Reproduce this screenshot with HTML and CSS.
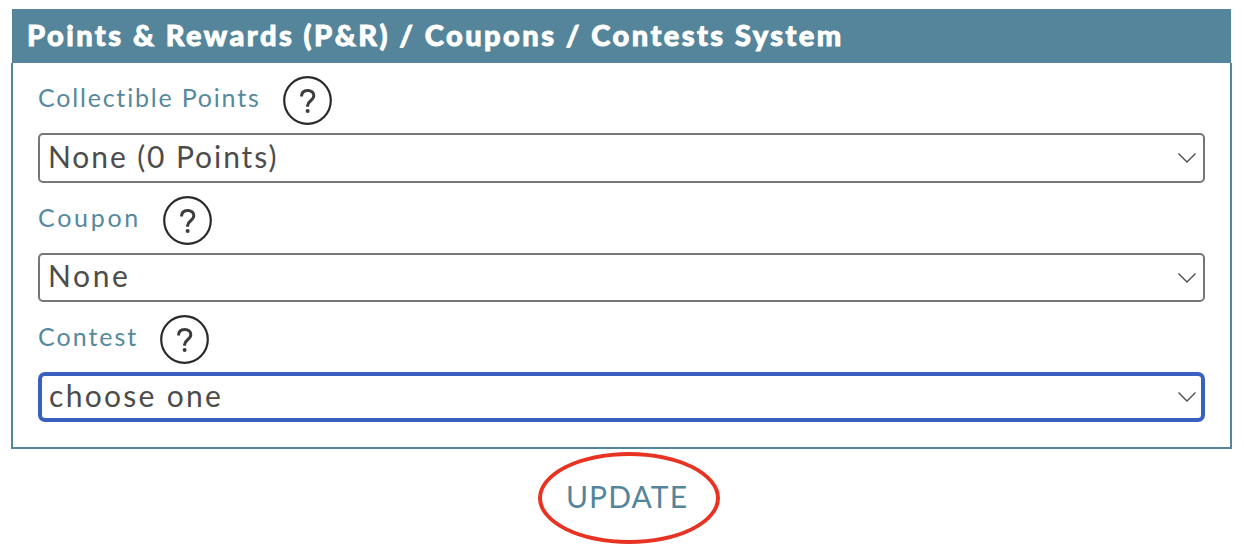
FILE: index.html
```html
<!doctype html>
<html lang="en">
  <head>
    <meta charset="utf-8">
    <title>Points &amp; Rewards</title>
    <link rel="stylesheet" href="styles.css">
  </head>
  <body>
    <svg class="sprite" aria-hidden="true">
      <symbol id="help" viewBox="0 0 49 49">
        <circle cx="24.5" cy="24.5" r="23.3" fill="none" stroke="#2a2a2a" stroke-width="2.2"/>
        <path d="M18.500 20.500c0-3.900 2.400-6 6.200-6s6.100 2.200 6.100 5.300c0 4.800-6.200 5-6.200 9.700v1.200" fill="none" stroke="#3c3c3c" stroke-width="3"/>
        <circle cx="24.600" cy="34.900" r="2" fill="#3c3c3c"/>
      </symbol>
      <symbol id="chevron" viewBox="0 0 20 12">
        <path d="M1.500 1.500L10 10l8.500-8.500" fill="none" stroke="#4c4c4c" stroke-width="1.400"/>
      </symbol>
    </svg>

    <form id="rewards">
      <h2>Points &amp; Rewards (P&amp;R) / Coupons / Contests System</h2>
      <div class="panel">
        <div class="field">
          <div class="label-row">
            <label class="label-points" for="points">Collectible Points</label>
            <svg class="help"><use href="#help"/></svg>
          </div>
          <div class="select">
            <select id="points"><option>None (0 Points)</option></select>
            <svg class="chevron"><use href="#chevron"/></svg>
          </div>
        </div>
        <div class="field">
          <div class="label-row">
            <label class="label-coupon" for="coupon">Coupon</label>
            <svg class="help"><use href="#help"/></svg>
          </div>
          <div class="select">
            <select id="coupon"><option>None</option></select>
            <svg class="chevron"><use href="#chevron"/></svg>
          </div>
        </div>
        <div class="field">
          <div class="label-row">
            <label class="label-contest" for="contest">Contest</label>
            <svg class="help"><use href="#help"/></svg>
          </div>
          <div class="select">
            <select id="contest" class="active"><option>choose one</option></select>
            <svg class="chevron"><use href="#chevron"/></svg>
          </div>
        </div>
      </div>
      <button type="button" class="update">UPDATE</button>
    </form>
  </body>
</html>
```

FILE: styles.css
```css
* {
  box-sizing: border-box;
}

body {
  margin: 0;
  background: #fff;
  font-family: Lato, "Liberation Sans", sans-serif;
}

.sprite {
  display: none;
}

#rewards {
  width: 1221px;
  margin: 0 0 0 11px;
  padding-top: 9px;
}

h2 {
  height: 54px;
  margin: 0 1px;
  padding-left: 15px;
  background: #55859a;
  color: #fff;
  font-size: 29px;
  font-weight: 900;
  line-height: 51px;
  letter-spacing: 2.45px;
  white-space: nowrap;
  -webkit-text-stroke: 0.9px #fff;
}

.panel {
  height: 386px;
  padding: 13px 25px 0 25px;
  border: 2px solid #55859a;
  border-top-width: 0;
}

.field {
  height: 119.5px;
}

.label-row {
  display: flex;
  height: 49px;
  margin-bottom: 8px;
}

label {
  color: #55899d;
  font-size: 25px;
  line-height: 43px;
  letter-spacing: 1.8px;
  white-space: nowrap;
}

.label-points {
  width: 245px;
}

.label-coupon {
  width: 124.5px;
  letter-spacing: 2.7px;
}

.label-contest {
  width: 122px;
  letter-spacing: 2px;
}

.help {
  width: 49px;
  height: 49px;
}

.select {
  position: relative;
}

select {
  display: block;
  width: 100%;
  height: 50px;
  padding: 0 0 4px 8px;
  border: 2px solid #767676;
  border-radius: 5px;
  outline: 0;
  background: #fff;
  color: #4c4c4c;
  font-family: inherit;
  font-size: 30px;
  letter-spacing: 1.9px;
  -webkit-appearance: none;
  appearance: none;
}

#coupon {
  height: 49.5px;
  letter-spacing: 2.6px;
}

select.active {
  height: 49.5px;
  padding-left: 7px;
  border: 4px solid #3860be;
  border-radius: 7px;
  letter-spacing: 2.3px;
}

.chevron {
  position: absolute;
  top: 19px;
  right: 8px;
  width: 20px;
  height: 12px;
}

/* hand-drawn ring round the button */
.update {
  display: block;
  width: 182px;
  height: 92px;
  margin: 3px 0 0 527px;
  padding: 0 4px 4px 0;
  border: 4px solid #e83323;
  border-radius: 50%;
  background: none;
  color: #55859a;
  font-family: inherit;
  font-size: 30px;
  letter-spacing: 1.1px;
}
```
